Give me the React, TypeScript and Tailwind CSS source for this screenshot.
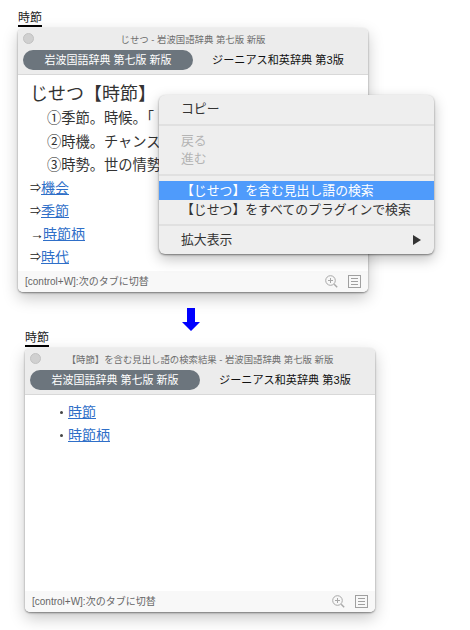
import React from 'react';

const FONT = '[font-family:"Liberation_Sans","Noto_Sans_CJK_JP",sans-serif]';

const TermLabel = () => (
  <div className="w-fit border-b-2 border-black text-[12px] leading-[14px] text-[#222]">時節</div>
);

const ZoomIcon = () => (
  <svg width="13" height="13" viewBox="0 0 13 13" fill="none" stroke="#a8a8a8" strokeWidth="1">
    <circle cx="5.5" cy="5.5" r="4.8" />
    <path d="M5.5 3v5M3 5.5h5" />
    <path d="M9.2 9.2l3 3" strokeWidth="1.4" />
  </svg>
);

const ListIcon = () => (
  <svg width="13" height="13" viewBox="0 0 13 13" fill="none" stroke="#a0a0a0" strokeWidth="1">
    <rect x="0.5" y="0.5" width="12" height="12" />
    <path d="M3 3.5h7M3 6.5h7M3 9.5h7" />
  </svg>
);

const Window = ({ title, children, overlay }: { title: string; children: React.ReactNode; overlay?: React.ReactNode }) => (
  <div className="relative w-[350px] h-[264px] flex flex-col rounded-[5px] bg-white shadow-[0_1px_2px_rgba(0,0,0,0.45),0_6px_16px_rgba(0,0,0,0.22)]">
    <div className="h-[47px] shrink-0 flex flex-col rounded-t-[5px] bg-[#ececec] border-b border-[#d8d8d8]">
      <div className="relative h-[22px] flex items-center justify-center">
        <span className="absolute left-[5px] top-[5px] w-[11px] h-[11px] rounded-full bg-[#d0d0d0] border border-[#c2c2c2]" />
        <span className="text-[9.4px] leading-none text-[#6e6e6e] pt-[1px]">{title}</span>
      </div>
      <div className="flex items-center pl-[5px]">
        <div className="w-[170px] h-[20px] rounded-full bg-[#6c757d] text-white text-[11px] leading-[20px] text-center">岩波国語辞典 第七版 新版</div>
        <div className="ml-[19px] text-[11.15px] leading-[20px] text-[#111]">ジーニアス和英辞典 第3版</div>
      </div>
    </div>
    <div className="flex-1 min-h-0">{children}</div>
    <div className="h-[21px] shrink-0 flex items-center justify-between pl-[7px] pr-[7px] rounded-b-[5px] bg-[#f8f8f8]">
      <span className="text-[10px] text-[#666]">[control+W]:次のタブに切替</span>
      <div className="flex items-center gap-[10px]">
        <ZoomIcon />
        <ListIcon />
      </div>
    </div>
    {overlay}
  </div>
);

const DefLink = ({ arrow, word }: { arrow: string; word: string }) => (
  <div className="h-[23px] leading-[23px] text-[14px] text-[#222] flex">
    {arrow === '→' ? (
      <span className="w-[13px]">{arrow}</span>
    ) : (
      <span className="w-[11px] text-[11px]">{arrow}</span>
    )}
    <a className="text-[#2f6fc8] underline">{word}</a>
  </div>
);

const ContextMenu = () => (
  <div className="absolute left-[141px] top-[67px] w-[275px] h-[159px] rounded-[6px] bg-[#eeeeee] shadow-[0_1px_2px_rgba(0,0,0,0.45),0_5px_14px_rgba(0,0,0,0.25)] text-[12.85px] text-[#333] flex flex-col">
    <div className="h-[29px] pl-[22px] leading-[28px]">コピー</div>
    <div className="h-[2px] bg-[#e0e0e0]" />
    <div className="pt-[6px] pb-[6px] pl-[22px] text-[#b4b4b4] leading-[18px]">
      <div>戻る</div>
      <div>進む</div>
    </div>
    <div className="h-[2px] bg-[#e0e0e0]" />
    <div className="mt-[5px] h-[19px] leading-[19px] pl-[22px] bg-[#4f9bfb] text-white">【じせつ】を含む見出し語の検索</div>
    <div className="h-[19px] leading-[19px] pl-[22px]">【じせつ】をすべてのプラグインで検索</div>
    <div className="mt-[5px] h-[2px] bg-[#e0e0e0]" />
    <div className="flex-1 flex items-center justify-between pl-[22px] pr-[13px]">
      <span>拡大表示</span>
      <span className="w-0 h-0 border-y-[5px] border-y-transparent border-l-[8px] border-l-[#333]" />
    </div>
  </div>
);

export default function App() {
  return (
    <div className={`w-[470px] h-[630px] overflow-hidden bg-white ${FONT}`}>
      <div className="pl-[18px] pt-[11px]">
        <TermLabel />
        <div className="mt-[1px]">
          <Window title="じせつ - 岩波国語辞典 第七版 新版" overlay={<ContextMenu />}>
            <div className="pl-[12px] pt-[6px]">
              <div className="text-[18px] leading-[26px] text-[#333]">じせつ【時節】</div>
              <div className="pl-[17px] text-[14.25px] leading-[23.5px] text-[#333] -mb-[1px]">
                <div>①季節。時候。「</div>
                <div>②時機。チャンス。</div>
                <div>③時勢。世の情勢。</div>
              </div>
              <DefLink arrow="⇒" word="機会" />
              <DefLink arrow="⇒" word="季節" />
              <DefLink arrow="→" word="時節柄" />
              <DefLink arrow="⇒" word="時代" />
            </div>
          </Window>
        </div>
      </div>

      <div className="flex pl-[182px] mt-[16px]">
        <svg width="18" height="23" viewBox="0 0 18 23" fill="#0000ff">
          <path d="M5 0h8v14h5l-9 9-9-9h5z" />
        </svg>
      </div>

      <div className="pl-[25px]">
        <TermLabel />
        <div className="mt-[1px]">
          <Window title="【時節】を含む見出し語の検索結果 - 岩波国語辞典 第七版 新版">
            <div className="pt-[6px] pl-[35px] text-[14px] leading-[23px] text-[#333]">
              <div className="flex items-center">
                <span className="w-[3px] h-[3px] mr-[5px] rounded-full bg-[#444]" />
                <a className="text-[#2f6fc8] underline">時節</a>
              </div>
              <div className="flex items-center">
                <span className="w-[3px] h-[3px] mr-[5px] rounded-full bg-[#444]" />
                <a className="text-[#2f6fc8] underline">時節柄</a>
              </div>
            </div>
          </Window>
        </div>
      </div>
    </div>
  );
}
